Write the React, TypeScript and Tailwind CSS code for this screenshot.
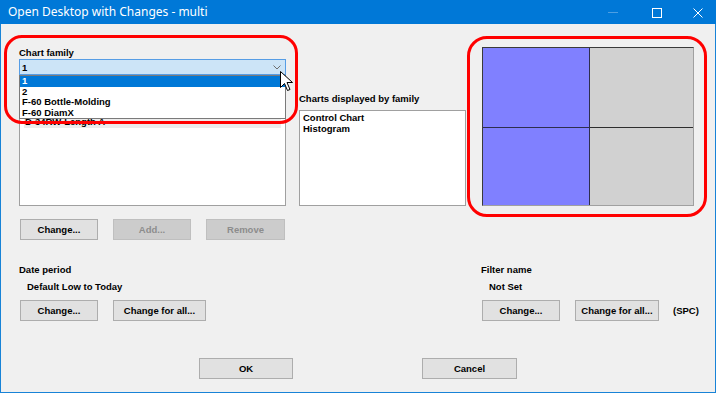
const ui = '"Liberation Sans", Arial, sans-serif'

function Btn({ w, label, disabled = false, className = '' }: { w: string; label: string; disabled?: boolean; className?: string }) {
  return (
    <div
      className={`${w} ${className} flex h-[21px] shrink-0 items-center justify-center border ${
        disabled ? 'border-[#bfbfbf] bg-[#cccccc] text-[#8c8c8c]' : 'border-[#adadad] bg-[#e1e1e1] text-black'
      }`}
    >
      {label}
    </div>
  )
}

function TitleBar() {
  return (
    <div className="flex h-6 shrink-0 items-center bg-[#0078d7] text-white">
      <span className="ml-2 text-[12px]" style={{ fontFamily: '"Noto Sans", "Open Sans", sans-serif' }}>
        Open Desktop with Changes - multi
      </span>
      <div className="ml-auto flex h-full items-center">
        <svg width="46" height="24" viewBox="0 0 46 24" aria-hidden="true">
          <path d="M20 12.5H30" stroke="#4d9fe3" strokeWidth="1" />
        </svg>
        <svg width="46" height="24" viewBox="0 0 46 24" aria-hidden="true">
          <rect x="18.5" y="8.5" width="9" height="9" fill="none" stroke="#fff" strokeWidth="1" />
        </svg>
        <svg width="36" height="24" viewBox="0 0 36 24" aria-hidden="true">
          <path d="M13.5 8.5L22.5 17.5M22.5 8.5L13.5 17.5" stroke="#fff" strokeWidth="1" />
        </svg>
      </div>
    </div>
  )
}

export default function App() {
  return (
    <div className="relative flex h-[393px] w-[716px] flex-col overflow-hidden bg-[#f0f0f0]" style={{ fontFamily: ui }}>
      <TitleBar />
      <div className="flex flex-1 flex-col border-x border-b border-[#1883d7] text-[9.5px] font-bold leading-[11px] text-black">
        {/* top section */}
        <div className="flex items-start pl-[18px]">
          <div className="flex w-[267px] flex-col">
            <div className="mt-[22px] h-[13px] leading-[13px]">Chart family</div>
            <div className="flex h-[16px] items-center justify-between border border-[#569de5] bg-[#cce4f7] pl-[2px] pr-[4px]">
              <span>1</span>
              <svg width="8" height="5" viewBox="0 0 8 5" aria-hidden="true">
                <path d="M0.5 0.5L4 4L7.5 0.5" fill="none" stroke="#6d6d6d" strokeWidth="1" />
              </svg>
            </div>
            <div className="mt-[35px] h-[96px] border border-[#a0a0a0] bg-white p-[2px]">
              {/* mostly hidden behind the open dropdown */}
              <div className="mx-[2px] mt-[3px] h-[12px] bg-[#ececec] px-[1px] leading-[12px]">D-34RW-Length A</div>
            </div>
            <div className="ml-px mt-[13px] flex gap-[15px]">
              <Btn w="w-[78px]" label="Change..." />
              <Btn w="w-[78px]" label="Add..." disabled />
              <Btn w="w-[79px]" label="Remove" disabled />
            </div>
          </div>

          <div className="ml-[13px] flex w-[167px] flex-col">
            <div className="mt-[68px] h-[13px] leading-[13px]">Charts displayed by family</div>
            <div className="mt-[5px] h-[96px] border border-[#a0a0a0] bg-white px-[3px] pt-[1px]">
              <div>Control Chart</div>
              <div>Histogram</div>
            </div>
          </div>

          <div className="ml-[16px] mt-[23px] grid h-[159px] w-[212px] grid-cols-[107px_1fr] grid-rows-[80px_1fr] border border-[#3a3a3a] border-b-[#a0a0a0] border-r-[#a0a0a0]">
            <div className="border-b border-r border-[#2e2e4e] bg-[#8080ff]" />
            <div className="border-b border-[#2e2e2e] bg-[#d1d1d1]" />
            <div className="border-r border-[#2e2e4e] bg-[#8080ff]" />
            <div className="bg-[#d1d1d1]" />
          </div>
        </div>

        {/* date period / filter */}
        <div className="flex items-start pl-[18px]">
          <div className="flex w-[462px] flex-col">
            <div className="mt-[23px] h-[13px] leading-[13px]">Date period</div>
            <div className="mt-[4px] h-[13px] pl-[8px] leading-[13px]">Default Low to Today</div>
            <div className="ml-px mt-[7px] flex gap-[15px]">
              <Btn w="w-[78px]" label="Change..." />
              <Btn w="w-[93px]" label="Change for all..." />
            </div>
          </div>
          <div className="flex flex-col">
            <div className="mt-[23px] h-[13px] leading-[13px]">Filter name</div>
            <div className="mt-[4px] h-[13px] pl-[8px] leading-[13px]">Not Set</div>
            <div className="ml-px mt-[7px] flex items-center">
              <Btn w="w-[78px]" label="Change..." />
              <Btn w="w-[84px]" label="Change for all..." className="ml-[15px]" />
              <span className="ml-[14px]">(SPC)</span>
            </div>
          </div>
        </div>

        {/* ok / cancel */}
        <div className="ml-[198px] mt-[37px] flex gap-[129px]">
          <Btn w="w-[94px]" label="OK" />
          <Btn w="w-[95px]" label="Cancel" />
        </div>
      </div>

      {/* open dropdown list */}
      <div className="absolute left-[19px] top-[75px] h-[44px] w-[267px] border border-[#7a7a7a] bg-white text-[9.5px] font-bold leading-[10.5px] text-black">
        <div className="bg-[#0078d7] pl-[2px] text-white">1</div>
        <div className="pl-[2px]">2</div>
        <div className="pl-[2px]">F-60 Bottle-Molding</div>
        <div className="pl-[2px]">F-60 DiamX</div>
      </div>

      {/* annotations */}
      <div className="pointer-events-none absolute left-[4px] top-[35px] h-[89px] w-[294px] rounded-[18px] border-[3px] border-[#ff0000]" />
      <div className="pointer-events-none absolute left-[467px] top-[36px] h-[181px] w-[240px] rounded-[20px] border-[3px] border-[#ff0000]" />

      {/* mouse cursor */}
      <svg className="absolute left-[280px] top-[71px]" width="14" height="21" viewBox="0 0 14 21" aria-hidden="true">
        <path d="M0.5 0.5V16.5L4.5 12.5L7.5 19.5L10 18.5L7 11.5H12.5Z" fill="#fff" stroke="#000" strokeWidth="1" strokeLinejoin="round" />
      </svg>
    </div>
  )
}
